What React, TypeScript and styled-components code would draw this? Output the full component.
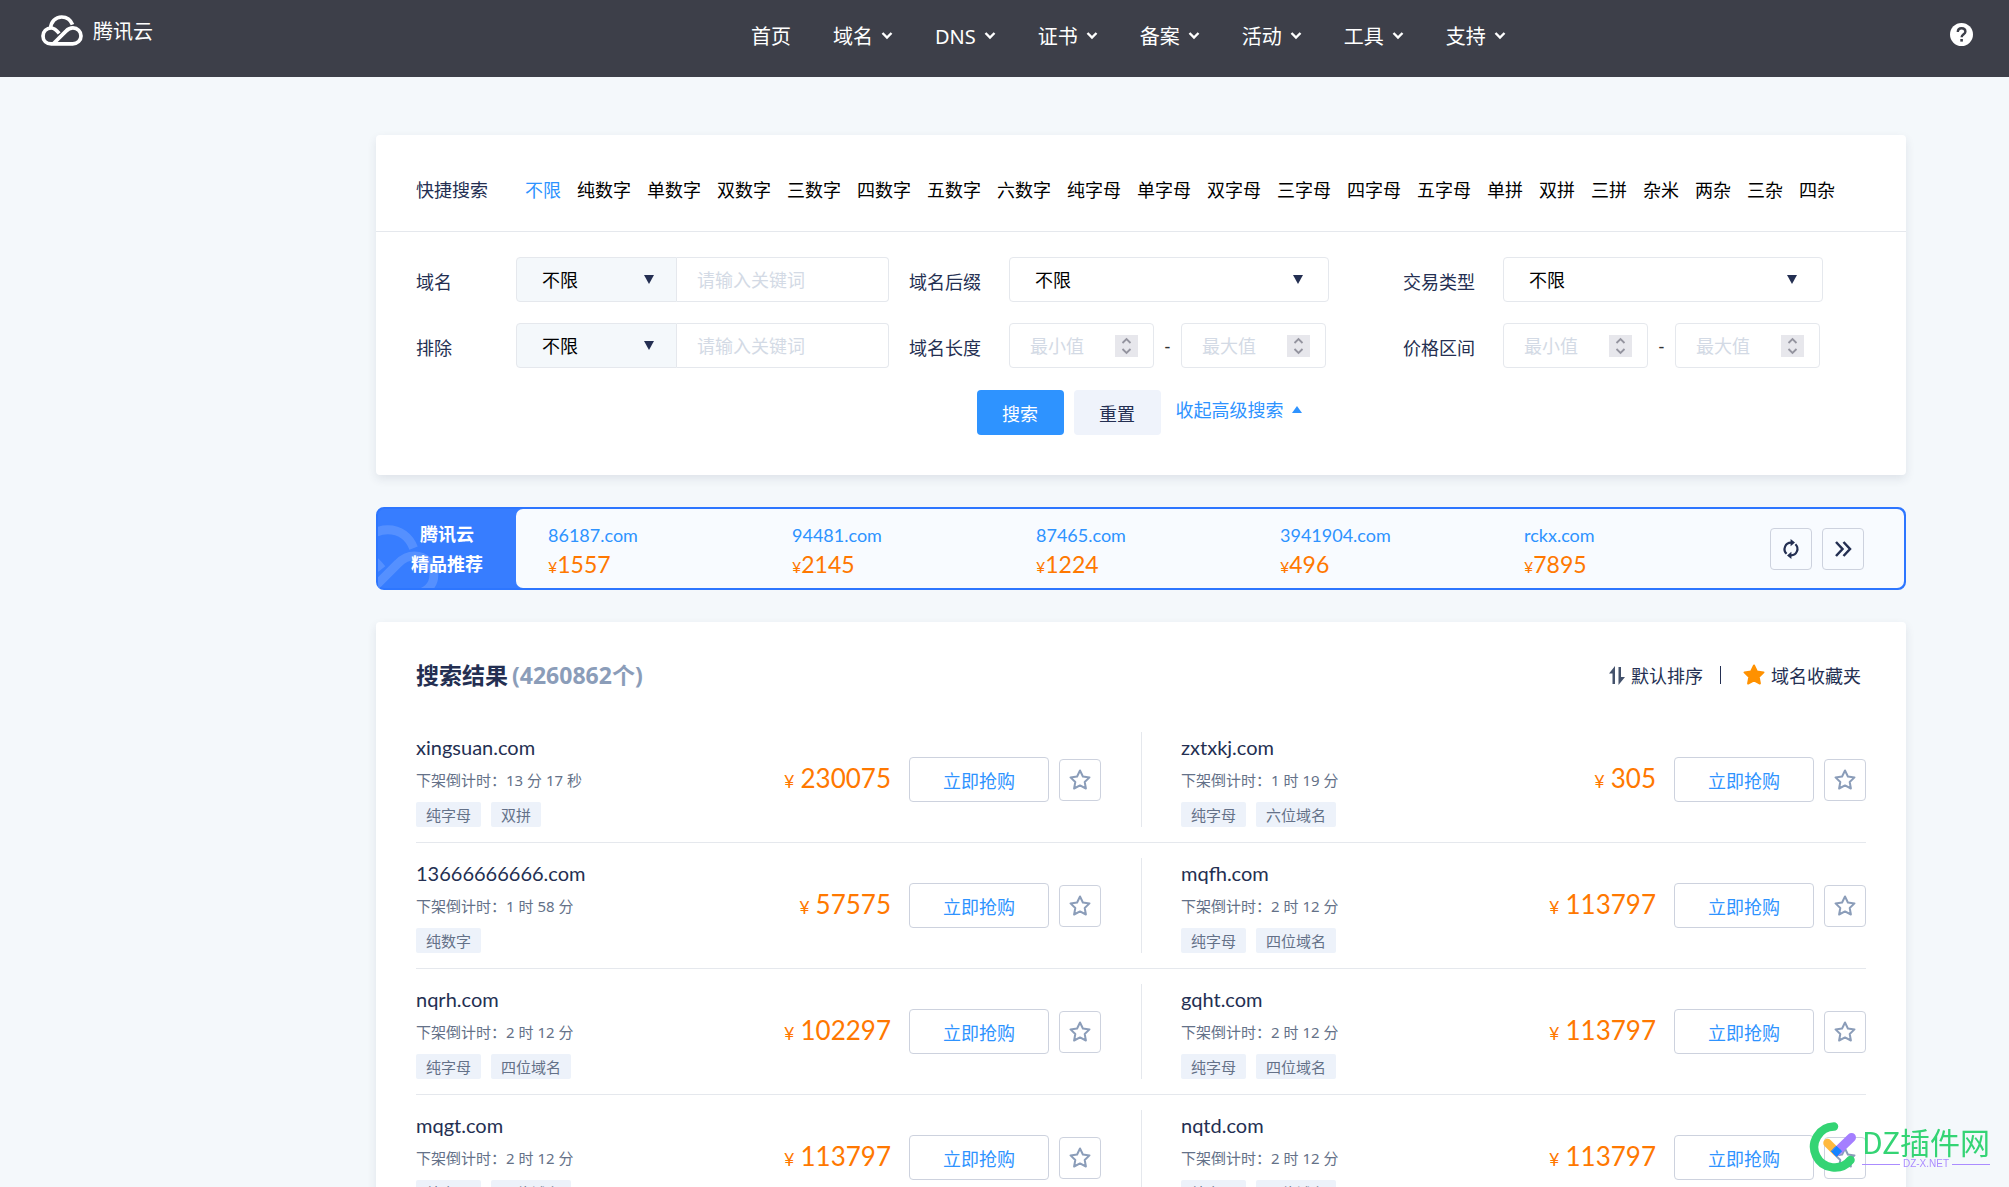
import React from "react";
import styled, { createGlobalStyle } from "styled-components";

const ink = "#242f52";
const blue = "#2e93ff";
const orange = "#ff7800";
const line = "#e5e8ed";
const numeric = `Lato, "Noto Sans CJK SC", sans-serif`;

const Global = createGlobalStyle`
  *, *::before, *::after { box-sizing: border-box; }
  body { margin: 0; background: #f4f8fb; }
  body, button, input, select {
    font-family: "Noto Sans", "Noto Sans CJK SC", sans-serif;
    font-size: 18px;
  }
  a { color: inherit; text-decoration: none; }
  button { cursor: pointer; padding: 0; }
`;

const Page = styled.div`
  height: 100vh;
  overflow: hidden;
  color: ${ink};
`;

/* ---------- header ---------- */

const Header = styled.header`
  display: grid;
  grid-template-columns: 710px 1fr auto;
  height: 77px;
  padding: 0 36px 0 41px;
  background: #3d3f49;
  color: #fff;
`;

const Brand = styled.a`
  display: flex;
  gap: 10px;
  align-items: center;
  height: 60px;
  font-size: 20px;
`;

const Nav = styled.nav`
  display: flex;
  gap: 42px;
  align-items: center;
  height: 74px;
`;

const NavLink = styled.a`
  display: flex;
  gap: 8px;
  align-items: center;
  font-size: 20px;
  line-height: 28px;
  white-space: nowrap;
`;

const HelpLink = styled.a`
  display: flex;
  align-items: center;
  height: 69px;
`;

/* ---------- cards ---------- */

const Main = styled.main`
  display: flex;
  flex-direction: column;
  gap: 32px;
  padding: 58px 103px 0 376px;
`;

const Card = styled.section`
  flex-shrink: 0;
  background: #fff;
  border-radius: 4px;
  box-shadow: 0 4px 10px rgba(36, 47, 82, 0.1);
`;

const QuickBar = styled.div`
  display: flex;
  align-items: center;
  height: 97px;
  padding: 12px 40px 0;
  border-bottom: 1px solid ${line};
`;

const QuickTitle = styled.span`
  width: 109px;
  white-space: nowrap;
`;

const QuickList = styled.div`
  display: flex;
  gap: 16px;
`;

const QuickLink = styled.a<{ $active?: boolean }>`
  color: ${(p) => (p.$active ? blue : "#000")};
  white-space: nowrap;
`;

/* ---------- search form ---------- */

const Form = styled.form`
  padding: 25px 40px 40px;
`;

const Fields = styled.div`
  display: grid;
  grid-template-columns: 493fr 494fr 463fr;
  row-gap: 21px;
`;

const Field = styled.div`
  display: grid;
  grid-template-columns: 100px auto;
  justify-content: start;
  align-items: center;
  height: 45px;
`;

const FieldLabel = styled.label`
  padding-top: 3px;
  white-space: nowrap;
`;

const Joined = styled.div`
  display: flex;
`;

const SelectBox = styled.div<{ $tinted?: boolean }>`
  display: grid;
  align-items: center;
  width: ${(p) => (p.$tinted ? 161 : 320)}px;
  height: 45px;
  border: 1px solid ${line};
  border-radius: ${(p) => (p.$tinted ? "4px 0 0 4px" : "4px")};
  background: ${(p) => (p.$tinted ? "#f4f8fb" : "#fff")};

  & > * { grid-area: 1 / 1; }
  & > svg {
    justify-self: end;
    margin-right: ${(p) => (p.$tinted ? 22 : 25)}px;
    pointer-events: none;
  }
`;

const Select = styled.select`
  appearance: none;
  width: 100%;
  height: 43px;
  padding: 1px 25px 0;
  border: 0;
  background: transparent;
  color: #000;
`;

const KeywordInput = styled.input`
  width: 212px;
  height: 45px;
  padding: 1px 20px 0;
  border: 1px solid ${line};
  border-left: 0;
  border-radius: 0 4px 4px 0;
  &::placeholder { color: #d3dae5; }
`;

const Range = styled.div`
  display: flex;
  align-items: center;
`;

const Dash = styled.span`
  width: 27px;
  text-align: center;
  color: #333;
`;

const NumberBox = styled.div`
  display: flex;
  align-items: center;
  justify-content: space-between;
  width: 145px;
  height: 45px;
  padding: 0 15px 0 20px;
  border: 1px solid ${line};
  border-radius: 4px;
`;

const NumberInput = styled.input`
  width: 70px;
  padding: 0;
  border: 0;
  &::placeholder { color: #d3dae5; }
`;

const Actions = styled.div`
  display: flex;
  justify-content: center;
  margin-top: 22px;
  padding-right: 4px;
`;

const ActionButton = styled.button<{ $primary?: boolean }>`
  width: 87px;
  height: 45px;
  margin-right: ${(p) => (p.$primary ? 10 : 15)}px;
  border: 0;
  border-radius: 4px;
  background: ${(p) => (p.$primary ? blue : "#eff3fb")};
  color: ${(p) => (p.$primary ? "#fff" : ink)};
`;

const FoldLink = styled.a`
  display: flex;
  gap: 8px;
  align-items: center;
  height: 38px;
  color: ${blue};
`;

/* ---------- recommendations ---------- */

const Featured = styled.section`
  display: grid;
  grid-template-columns: 138px 1fr;
  flex-shrink: 0;
  height: 83px;
  border: 2px solid #2d76ff;
  border-radius: 8px;
  background: #377dff;
`;

const FeaturedTitle = styled.h2`
  position: relative;
  overflow: hidden;
  margin: 0;
  padding-top: 10px;
  color: #fff;
  font-size: 18px;
  font-weight: 700;
  line-height: 30px;
  text-align: center;
`;

const FeaturedMark = styled.span`
  position: absolute;
  top: 16px;
  left: -40px;
  opacity: 0.15;
`;

const FeaturedBody = styled.div`
  display: flex;
  align-items: center;
  justify-content: space-between;
  padding: 0 40px 0 32px;
  border-radius: 7px;
  background: #f8fbff;
`;

const FeaturedList = styled.div`
  display: grid;
  flex: 0 1 1220px;
  grid-template-columns: repeat(5, 1fr);
  padding-top: 4px;
`;

const FeaturedItem = styled.a`
  font-family: ${numeric};
  color: ${blue};
  line-height: 30px;
`;

const FeaturedPrice = styled.div`
  color: ${orange};
  font-size: 23px;
  line-height: 28px;
  small { font-size: 16px; }
`;

const ButtonPair = styled.div`
  display: flex;
  gap: 10px;
`;

const IconButton = styled.button`
  display: flex;
  flex-shrink: 0;
  align-items: center;
  justify-content: center;
  width: 42px;
  height: 42px;
  border: 1px solid #cdd2de;
  border-radius: 4px;
  background: transparent;
`;

/* ---------- results ---------- */

const Results = styled(Card)`
  padding: 0 40px;
`;

const ResultsHead = styled.div`
  display: flex;
  align-items: center;
  justify-content: space-between;
  height: 95px;
  padding: 10px 5px 0 0;
`;

const ResultsTitle = styled.h1`
  margin: 0;
  font-size: 23px;
  line-height: 32px;
  span { margin-left: 4px; color: #8b9db9; }
`;

const Tools = styled.div`
  display: flex;
  align-items: center;
`;

const ToolLink = styled.a`
  display: flex;
  gap: 6px;
  align-items: center;
`;

const Divider = styled.span`
  width: 1px;
  height: 18px;
  margin: 0 22px 0 17px;
  background: ${ink};
`;

const Row = styled.div`
  display: grid;
  grid-template-columns: 1fr 1fr;
  padding: 15px 0;
  border-bottom: 1px solid ${line};
`;

const Offer = styled.article`
  display: flex;
  align-items: center;
  height: 95px;

  &:first-child { padding-right: 40px; }
  &:last-child {
    padding-left: 39px;
    border-left: 1px solid ${line};
  }
`;

const OfferInfo = styled.div`
  flex: 1;
  height: 95px;
`;

const OfferName = styled.a`
  display: block;
  font-family: ${numeric};
  font-size: 20px;
  line-height: 30px;
`;

const Countdown = styled.div`
  padding-top: 2px;
  color: #647188;
  font-size: 15px;
  line-height: 32px;
`;

const Tags = styled.div`
  display: flex;
  gap: 10px;
  margin-top: 6px;
`;

const Tag = styled.span`
  height: 25px;
  padding: 0 10px;
  border-radius: 2px;
  background: #edf2fa;
  color: #647188;
  font-size: 15px;
  line-height: 26px;
`;

const Price = styled.div`
  margin-right: 18px;
  color: ${orange};
  font-family: ${numeric};
  font-size: 26px;
  line-height: 32px;
  small { margin-right: 6px; font-size: 18px; }
`;

const BuyButton = styled.button`
  width: 140px;
  height: 45px;
  margin-right: 10px;
  border: 1px solid #cdd2de;
  border-radius: 4px;
  background: #fff;
  color: ${blue};
`;

/* ---------- site badge ---------- */

const Badge = styled.aside`
  position: fixed;
  right: 19px;
  bottom: 15px;
  display: flex;
  gap: 5px;
  align-items: center;
`;

const BadgeText = styled.div`
  color: #34d474;
  font-family: "Noto Sans CJK SC", sans-serif;
  font-size: 30px;
  line-height: 34px;
`;

const BadgeSite = styled.div`
  display: flex;
  gap: 3px;
  align-items: center;
  color: #ab8cff;
  font-family: "Liberation Sans", Arial, sans-serif;
  font-size: 10px;
  line-height: 12px;

  &::before, &::after {
    content: "";
    flex: 1;
    height: 1px;
    background: #ab8cff;
  }
`;

/* ---------- drawings ---------- */

const CloudLogo = ({ width, height }: { width: number; height: number }) => (
  <svg width={width} height={height} viewBox="0 0 42 31" fill="none" stroke="#fff" strokeWidth="3.7" aria-hidden="true">
    <path d="M9.6 13.5C9.8 6.8 14.4 2 20.7 2c5 0 9 2.900 10.800 7.700" />
    <path d="M18.200 18.400C15 14.400 13 13 10.200 13 5.500 13 2 16.300 2 20.900c0 4.600 3.400 7.900 8.300 7.900h21.400c4.800 0 8.300-3.400 8.300-7.900s-3.500-8-8.100-8c-2.700 0-4.700.9-6.900 3.200L12.800 28.300" />
  </svg>
);

const NavChevron = () => (
  <svg width="12" height="10" viewBox="0 0 12 10" fill="none" stroke="#fff" strokeWidth="2.400" aria-hidden="true">
    <path d="M1.500 1 6 5.500 10.500 1" />
  </svg>
);

const Triangle = ({ up }: { up?: boolean }) => (
  <svg width="10" height="9" viewBox="0 0 10 9" aria-hidden="true">
    <path d={up ? "M5 1l5 7H0z" : "M0 0h10L5 9z"} fill={up ? blue : ink} />
  </svg>
);

const Stepper = () => (
  <svg width="23" height="22" viewBox="0 0 23 22" aria-hidden="true">
    <rect width="23" height="22" fill="#e7e7ec" />
    <path d="M7.500 8l4-4 4 4M7.500 14l4 4 4-4" fill="none" stroke="#94949f" strokeWidth="1.800" />
  </svg>
);

const HelpIcon = () => (
  <svg width="23" height="23" viewBox="0 0 23 23" aria-hidden="true">
    <circle cx="11.500" cy="11.500" r="11.500" fill="#fff" />
    <path d="M7.800 9c0-2.300 1.600-3.700 3.800-3.700s3.800 1.400 3.800 3.400c0 2.500-3.800 2.700-3.800 5.600" fill="none" stroke="#3d3f49" strokeWidth="2.400" />
    <rect x="10.300" y="16" width="2.600" height="2.600" fill="#3d3f49" />
  </svg>
);

const RefreshIcon = () => (
  <svg width="18" height="20" viewBox="0 0 18 20" fill="none" stroke={ink} strokeWidth="2.200" aria-hidden="true">
    <path d="M4.600 14.800A6.500 6.500 0 0 1 9.300 3.600M13.400 5.200A6.500 6.500 0 0 1 8.700 16.400" />
    <path d="M8.600 0l4.400 3.600-4.400 3.600zM9.400 12.800L5 16.400 9.400 20z" fill={ink} stroke="none" />
  </svg>
);

const DoubleChevron = () => (
  <svg width="18" height="16" viewBox="0 0 18 16" fill="none" stroke={ink} strokeWidth="2.500" aria-hidden="true">
    <path d="M2 1l6.500 7L2 15M9.500 1L16 8l-6.500 7" />
  </svg>
);

const SortIcon = () => (
  <svg width="16" height="20" viewBox="0 0 16 20" fill="#44526c" aria-hidden="true">
    <path d="M6 1v18H3.500V8.500H0zM9.500 2H12v10h4L9.500 20z" />
  </svg>
);

const starPath = "M11 1.500l2.900 6 6.600.9-4.800 4.600 1.200 6.500L11 16.400l-5.900 3.100 1.200-6.500L1.500 8.400l6.600-.9z";

const Star = ({ filled }: { filled?: boolean }) => (
  <svg
    width="22"
    height="21"
    viewBox="0 0 22 21"
    fill={filled ? "#ff9100" : "none"}
    stroke={filled ? "#ff9100" : "#8b9db9"}
    strokeWidth="2"
    strokeLinejoin="round"
    aria-hidden="true"
  >
    <path d={starPath} />
  </svg>
);

const BadgeLogo = () => (
  <svg width="48" height="50" viewBox="0 0 48 50" fill="none" strokeLinecap="round" aria-hidden="true">
    <path d="M25 4.500A20.500 20.500 0 1 0 41.500 38" stroke="#34d474" strokeWidth="8.500" />
    <path d="M18.500 21l9 9" stroke="#ffb93e" strokeWidth="8.500" />
    <path d="M42.500 15.500L28 29.500" stroke="#a47eff" strokeWidth="9" />
    <path d="M27.500 24.500l5 4.500-5 5.500-5-5z" fill="#1684ff" stroke="#1684ff" strokeWidth="1" strokeLinejoin="round" />
  </svg>
);

/* ---------- data ---------- */

const navItems = ["首页", "域名", "DNS", "证书", "备案", "活动", "工具", "支持"];

const quickItems = [
  "不限", "纯数字", "单数字", "双数字", "三数字", "四数字", "五数字", "六数字",
  "纯字母", "单字母", "双字母", "三字母", "四字母", "五字母",
  "单拼", "双拼", "三拼", "杂米", "两杂", "三杂", "四杂",
];

const featured = [
  ["86187.com", "1557"],
  ["94481.com", "2145"],
  ["87465.com", "1224"],
  ["3941904.com", "496"],
  ["rckx.com", "7895"],
];

type OfferData = { name: string; left: string; tags: string[]; price: string };

const rows: OfferData[][] = [
  [
    { name: "xingsuan.com", left: "13 分 17 秒", tags: ["纯字母", "双拼"], price: "230075" },
    { name: "zxtxkj.com", left: "1 时 19 分", tags: ["纯字母", "六位域名"], price: "305" },
  ],
  [
    { name: "13666666666.com", left: "1 时 58 分", tags: ["纯数字"], price: "57575" },
    { name: "mqfh.com", left: "2 时 12 分", tags: ["纯字母", "四位域名"], price: "113797" },
  ],
  [
    { name: "nqrh.com", left: "2 时 12 分", tags: ["纯字母", "四位域名"], price: "102297" },
    { name: "gqht.com", left: "2 时 12 分", tags: ["纯字母", "四位域名"], price: "113797" },
  ],
  [
    { name: "mqgt.com", left: "2 时 12 分", tags: ["纯字母", "四位域名"], price: "113797" },
    { name: "nqtd.com", left: "2 时 12 分", tags: ["纯字母", "四位域名"], price: "113797" },
  ],
];

/* ---------- composed parts ---------- */

const Dropdown = ({ id, tinted }: { id: string; tinted?: boolean }) => (
  <SelectBox $tinted={tinted}>
    <Select id={id}>
      <option>不限</option>
    </Select>
    <Triangle />
  </SelectBox>
);

const KeywordField = ({ id, label }: { id: string; label: string }) => (
  <Field>
    <FieldLabel htmlFor={id}>{label}</FieldLabel>
    <Joined>
      <Dropdown id={id} tinted />
      <KeywordInput type="text" aria-label={label} placeholder="请输入关键词" />
    </Joined>
  </Field>
);

const SelectField = ({ id, label }: { id: string; label: string }) => (
  <Field>
    <FieldLabel htmlFor={id}>{label}</FieldLabel>
    <Dropdown id={id} />
  </Field>
);

const RangeField = ({ id, label }: { id: string; label: string }) => (
  <Field>
    <FieldLabel htmlFor={id}>{label}</FieldLabel>
    <Range>
      <NumberBox>
        <NumberInput id={id} inputMode="numeric" placeholder="最小值" />
        <Stepper />
      </NumberBox>
      <Dash>-</Dash>
      <NumberBox>
        <NumberInput aria-label={label} inputMode="numeric" placeholder="最大值" />
        <Stepper />
      </NumberBox>
    </Range>
  </Field>
);

const OfferCell = ({ name, left, tags, price }: OfferData) => (
  <Offer>
    <OfferInfo>
      <OfferName href="#">{name}</OfferName>
      <Countdown>下架倒计时：{left}</Countdown>
      <Tags>
        {tags.map((t) => (
          <Tag key={t}>{t}</Tag>
        ))}
      </Tags>
    </OfferInfo>
    <Price>
      <small>¥</small>
      {price}
    </Price>
    <BuyButton type="button">立即抢购</BuyButton>
    <IconButton type="button" aria-label="收藏">
      <Star />
    </IconButton>
  </Offer>
);

export default function App() {
  return (
    <Page>
      <Global />
      <Header>
        <Brand href="#">
          <CloudLogo width={42} height={31} />
          腾讯云
        </Brand>
        <Nav>
          {navItems.map((item, i) => (
            <NavLink key={item} href="#">
              {item}
              {i > 0 && <NavChevron />}
            </NavLink>
          ))}
        </Nav>
        <HelpLink href="#" aria-label="帮助">
          <HelpIcon />
        </HelpLink>
      </Header>

      <Main>
        <Card>
          <QuickBar>
            <QuickTitle>快捷搜索</QuickTitle>
            <QuickList>
              {quickItems.map((item, i) => (
                <QuickLink key={item} href="#" $active={i === 0}>
                  {item}
                </QuickLink>
              ))}
            </QuickList>
          </QuickBar>
          <Form onSubmit={(e) => e.preventDefault()}>
            <Fields>
              <KeywordField id="keyword" label="域名" />
              <SelectField id="suffix" label="域名后缀" />
              <SelectField id="trade" label="交易类型" />
              <KeywordField id="exclude" label="排除" />
              <RangeField id="length" label="域名长度" />
              <RangeField id="price" label="价格区间" />
            </Fields>
            <Actions>
              <ActionButton type="submit" $primary>搜索</ActionButton>
              <ActionButton type="reset">重置</ActionButton>
              <FoldLink href="#">
                收起高级搜索
                <Triangle up />
              </FoldLink>
            </Actions>
          </Form>
        </Card>

        <Featured>
          <FeaturedTitle>
            <FeaturedMark>
              <CloudLogo width={101} height={74} />
            </FeaturedMark>
            腾讯云
            <br />
            精品推荐
          </FeaturedTitle>
          <FeaturedBody>
            <FeaturedList>
              {featured.map(([name, price]) => (
                <FeaturedItem key={name} href="#">
                  {name}
                  <FeaturedPrice>
                    <small>¥</small>
                    {price}
                  </FeaturedPrice>
                </FeaturedItem>
              ))}
            </FeaturedList>
            <ButtonPair>
              <IconButton type="button" aria-label="换一批">
                <RefreshIcon />
              </IconButton>
              <IconButton type="button" aria-label="更多">
                <DoubleChevron />
              </IconButton>
            </ButtonPair>
          </FeaturedBody>
        </Featured>

        <Results>
          <ResultsHead>
            <ResultsTitle>
              搜索结果<span>(4260862个)</span>
            </ResultsTitle>
            <Tools>
              <ToolLink href="#">
                <SortIcon />
                默认排序
              </ToolLink>
              <Divider />
              <ToolLink href="#">
                <Star filled />
                域名收藏夹
              </ToolLink>
            </Tools>
          </ResultsHead>
          {rows.map((pair) => (
            <Row key={pair[0].name}>
              {pair.map((offer) => (
                <OfferCell key={offer.name} {...offer} />
              ))}
            </Row>
          ))}
        </Results>
      </Main>

      <Badge>
        <BadgeLogo />
        <div>
          <BadgeText>DZ插件网</BadgeText>
          <BadgeSite>DZ-X.NET</BadgeSite>
        </div>
      </Badge>
    </Page>
  );
}
